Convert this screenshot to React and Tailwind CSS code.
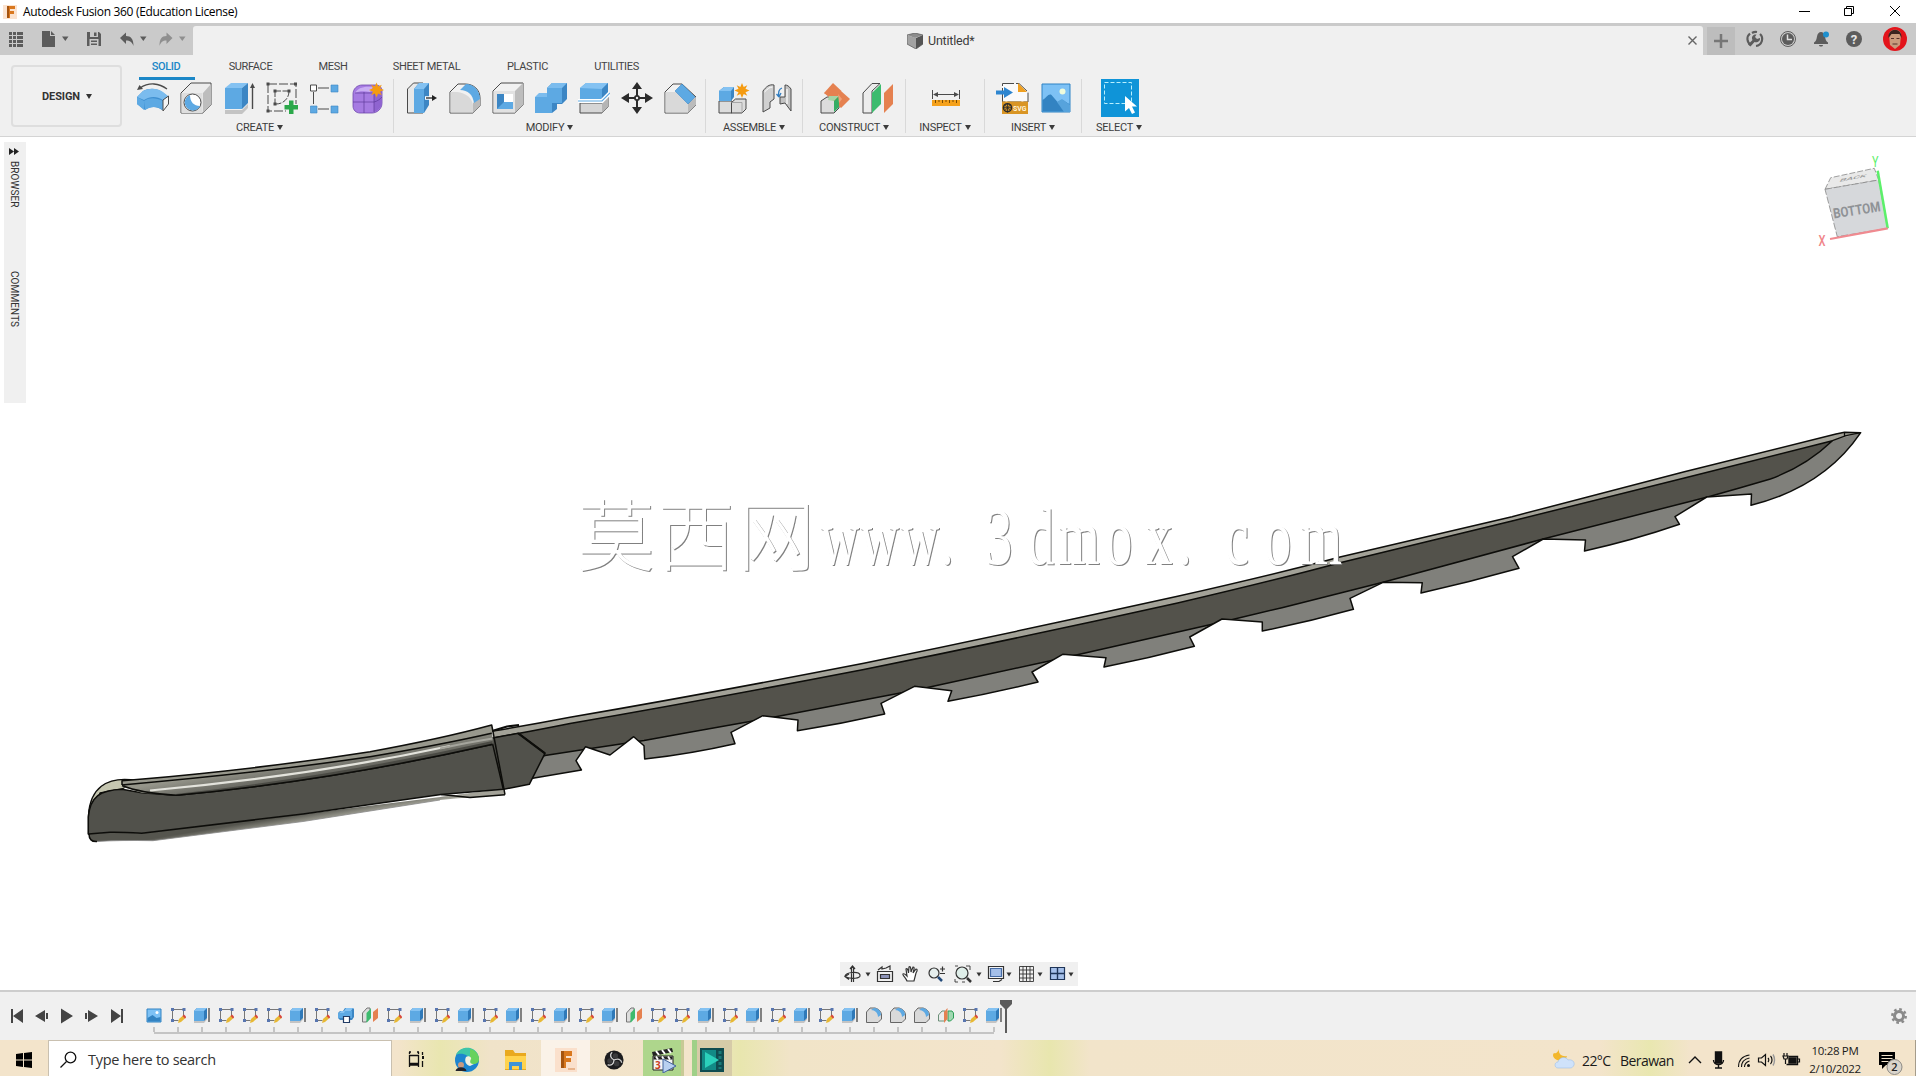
import clsx from 'clsx';

const BLUE = '#5da9e3';
const GREY = '#d9d9d9';
const INK = '#4a4a4a';

function Caret({ className }) {
  return (
    <svg viewBox="0 0 6 5" className={clsx('w-1.5 h-[5px] shrink-0', className)} fill="currentColor">
      <path d="M0 0h6L3 5z" />
    </svg>
  );
}

function Icon({ children, size = 'w-8 h-8', box = '0 0 32 32' }) {
  return (
    <svg viewBox={box} className={clsx('shrink-0', size)} fill="none">
      {children}
    </svg>
  );
}

/* ---------- ribbon icons ---------- */

function RevolveIcon() {
  return (
    <Icon>
      <path d="M3 6C12 0 22 1 30 7" stroke={INK} strokeWidth="1.3" />
      <path d="M0 8l2.500-5L6 7z" fill={INK} />
      <path d="M0 15l6-6c6-3 13-3 19 1l7 5-7 13c-5-4-12-4-17 0L0 22z" fill="#3f8fd0" />
      <path d="M0 15l6-6c7-3 14-3 20 1l5 4-5 4c-6-4-13-4-19 0z" fill="#7bbcee" />
      <path d="M0 15l7 4v9l-7-6zM7 19c6-4 12-3 19 0v9c-6-4-12-4-18 0z" fill={BLUE} />
      <path d="M26 18l5.500-4v8L26 29z" fill="#f5f5f5" stroke={INK} />
    </Icon>
  );
}

function HoleIcon() {
  return (
    <Icon>
      <path d="M1 11l10-10h20v22l-8 8H1z" fill="#ececec" stroke={INK} />
      <path d="M23 11l8-9v21l-8 8z" fill="#bdbdbd" />
      <path d="M1.500 11h21v20h-21z" fill="#dedede" />
      <circle cx="12.500" cy="20.500" r="8.500" fill="#fff" stroke={INK} />
      <path d="M10 13a8 8 0 1 0 10 11c-6 0-10-4-10-11z" fill={BLUE} />
    </Icon>
  );
}

function ExtrudeIcon() {
  return (
    <Icon>
      <path d="M2 28h17l6-6v4l-6 6H2z" fill="#c4c4c4" />
      <path d="M2 6l6-5h17l-6 5z" fill="#84c2f2" />
      <path d="M2 6h17v21H2z" fill={BLUE} />
      <path d="M19 6l6-5v20l-6 6z" fill="#3c86c4" />
      <path d="M29.500 4v23" stroke={INK} strokeWidth="1.400" />
      <path d="M27 6l2.500-5L32 6z" fill={INK} />
    </Icon>
  );
}

function SketchIcon() {
  return (
    <Icon>
      <path d="M2 2h28v20M2 2v27h18" stroke={INK} strokeDasharray="9 2" />
      <path d="M9 9h14M9 9v13M23 9c0 8-6 13-13 13" stroke={INK} strokeDasharray="6 1.500" />
      <path d="M0.500 0.500h3v3h-3zM28 0.500h3v3h-3zM0.500 27.500h3v3h-3zM7.500 7.500h3v3h-3zM21.500 7.500h3v3h-3zM7.500 20.500h3v3h-3z" fill={INK} />
      <path d="M23 18.500h4.500V23H32v4.500h-4.500V32H23v-4.500h-4.500V23H23z" fill="#2ba84a" />
    </Icon>
  );
}

function PatternIcon() {
  return (
    <Icon>
      <path d="M9 6h11M4.500 10v12M9 27h11" stroke={INK} />
      <path d="M1.500 3h6v6h-6z" fill="#fff" stroke={INK} />
      <path d="M22 3h7v7h-7zM1.500 24h6.500v7H1.500zM22 24h7v7h-7z" fill={BLUE} stroke="#3c86c4" strokeWidth=".6" />
    </Icon>
  );
}

function Burst({ x, y }) {
  return (
    <path
      transform={`translate(${x} ${y})`}
      d="M0-7.500L1.700-3.500 5.300-5.300 3.500-1.700 7.500 0 3.500 1.700 5.300 5.300 1.700 3.500 0 7.500-1.700 3.500-5.300 5.300-3.500 1.700-7.500 0-3.500-1.700-5.300-5.300-1.700-3.500z"
      fill="#f59b11"
    />
  );
}

function FormIcon() {
  return (
    <Icon>
      <path d="M1 12c0-5 4-9 9-9h13c4 0 7 2 7 6v12c0 6-5 10-10 10H8c-4 0-7-3-7-7z" fill="#a67be2" stroke="#6f48ad" strokeWidth=".8" />
      <path d="M3 11c3-5 8-7 18-6l-3 5c-6-1-11-1-15 1z" fill="#c9adf3" />
      <path d="M22 11c3-1 6-3 8-5v16c-2 5-5 7-8 8z" fill="#8f64d0" />
      <path d="M12 10v21M1 20h21c4-1 6-3 8-5M22 10v20M3 11h18" stroke="#5f3b9c" strokeWidth=".7" />
      <Burst x={24.500} y={8} />
    </Icon>
  );
}

function PressPullIcon() {
  return (
    <Icon>
      <path d="M1.500 7l6-6H17v30H1.500z" fill="#e8e8e8" stroke={INK} />
      <path d="M8 7l5-6h10v22l-5 8H8z" fill="#3c86c4" />
      <path d="M8 7l5-6h10l-5 6z" fill="#84c2f2" />
      <path d="M8 7h10v24H8z" fill={BLUE} />
      <path d="M19 16h9" stroke="#fff" strokeWidth="3.500" />
      <path d="M20 16h7" stroke="#222" strokeWidth="1.300" />
      <path d="M26 13l5 3-5 3z" fill="#222" />
    </Icon>
  );
}

function FilletIcon() {
  return (
    <Icon>
      <path d="M1 10l8-8h7c9 0 15 6 15 14v8l-7 7H1z" fill="#f1f1f1" stroke={INK} />
      <path d="M1.500 10H8c9 1 15 6 16 13v7.500H1.500z" fill={GREY} />
      <path d="M24 21l7-5v8l-7 7z" fill="#bbb" />
      <path d="M11 8l6-6c8 0 14 7 14 15l-6 4C24 13 19 8 11 8z" fill={BLUE} />
    </Icon>
  );
}

function ShellIcon() {
  return (
    <Icon>
      <path d="M1 9l8-8h22v22l-8 8H1z" fill="#f1f1f1" stroke={INK} />
      <path d="M23 9l8-8v22l-8 8z" fill="#bdbdbd" />
      <path d="M1.500 9H23v21.500H1.500z" fill="#e2e2e2" />
      <path d="M5 12h16v15H5z" fill="#fff" />
      <path d="M5 12h7v9l-6 6H5z" fill="#3c86c4" />
      <path d="M5 27l7-7h9v7z" fill={BLUE} />
    </Icon>
  );
}

function CombineIcon() {
  return (
    <Icon>
      <path d="M0 16l5-5h7V6l5-5h15v16l-5 5h-5v5l-5 4H0z" fill="#3c86c4" />
      <path d="M12 6l5-5h15l-5 5zM0 15l4-4h8v4z" fill="#7bbcee" />
      <path d="M12 6h15v15H12zM0 15h17v16H0z" fill={BLUE} />
    </Icon>
  );
}

function SplitIcon() {
  return (
    <Icon>
      <path d="M2 21h22l6-6v10l-6 6H2z" fill="#d6d6d6" stroke={INK} />
      <path d="M24 21l6-6v10l-6 6z" fill="#b5b5b5" />
      <path d="M2 6l6-5h22v10l-6 6H2z" fill={BLUE} />
      <path d="M2 6l6-5h22l-6 6z" fill="#84c2f2" />
      <path d="M24 7l6-6v10l-6 6z" fill="#3c86c4" />
      <path d="M0 19h24l8-8" stroke="#fff" strokeWidth="4" />
      <path d="M0 19h24l8-8" stroke={BLUE} strokeWidth="1.200" />
    </Icon>
  );
}

function MoveIcon() {
  return (
    <Icon>
      <path d="M16 5v22M5 16h22" stroke="#2b2b2b" strokeWidth="2" />
      <path d="M16 0l5 7H11zM16 32l5-7H11zM0 16l8-5v10zM32 16l-8-5v10z" fill="#2b2b2b" />
      <circle cx="16" cy="16" r="3" fill="#2b2b2b" />
      <circle cx="16" cy="16" r="1.200" fill="#f0f0f0" />
    </Icon>
  );
}

function ChamferIcon() {
  return (
    <Icon>
      <path d="M1 10l8-8h9l14 13v8l-8 8H1z" fill="#f1f1f1" stroke={INK} />
      <path d="M1.500 10H12l12 12v8.500H1.500z" fill={GREY} />
      <path d="M24 21l8-6v8l-8 8z" fill="#bbb" />
      <path d="M11 9l7-7 13 13-7 7z" fill={BLUE} stroke="#3c86c4" strokeWidth=".6" />
    </Icon>
  );
}

function ComponentIcon() {
  return (
    <Icon>
      <path d="M1 19h13v12H1z" fill="#dcdcdc" stroke={INK} />
      <path d="M13.500 20.500l4-3.500H28v10l-4 4H13.500z" fill="#dcdcdc" stroke={INK} />
      <path d="M13.500 20.500H24V31" stroke="#999" strokeWidth=".8" />
      <path d="M1 9l5-4h10v10l-3 4H1z" fill="#3c86c4" />
      <path d="M1 9h12v10H1z" fill={BLUE} />
      <path d="M1 9l5-4h10l-3 4z" fill="#84c2f2" />
      <Burst x={24} y={8.500} />
    </Icon>
  );
}

function JointIcon() {
  return (
    <Icon>
      <path d="M2 9c3-4 6-7 11-6v14l-4 3v6l-7 4z" fill="#d0d0d0" stroke={INK} />
      <path d="M3.500 10c3-3 5-5 8-5" stroke="#fff" />
      <path d="M30 7c-2-3-4-4-6-4v12h-5v7l5-1 6 8z" fill="#c2c2c2" stroke={INK} />
      <path d="M26 7v15" stroke="#f5f5f5" strokeWidth="1.500" />
      <path d="M18 15c-1-5 0-8 3-9M18 15l-2.500-3M18 15l2-4" stroke="#2f7cc0" strokeWidth="1.300" />
    </Icon>
  );
}

function OffsetPlaneIcon() {
  return (
    <Icon>
      <path d="M3 19l6-4h12v11l-5 5H3z" fill="#dcdcdc" stroke={INK} />
      <path d="M15 1l8.500 8-8.500 7-9-5z" fill="#e58150" />
      <path d="M6 11l7-1 10-1 9 8-9 9-6-6z" fill="#e58150" />
      <path d="M11 14h10l-5 5-6-1z" fill="#a5d5a5" />
      <path d="M16 19l5-5v11l-5 5z" fill="#35ad63" />
      <path d="M20 12l4 5-3 4z" fill="#f0a077" />
    </Icon>
  );
}

function MidPlaneIcon() {
  return (
    <Icon>
      <path d="M2 11L11 1.500h8L11 9v22H2z" fill="#ececec" stroke={INK} />
      <path d="M11 11l9-9v20l-9 9z" fill="#3dbb6e" />
      <path d="M23 11l9-9v20l-9 9z" fill="#e58150" />
    </Icon>
  );
}

function MeasureIcon() {
  return (
    <Icon>
      <path d="M2.500 8v9M29.500 8v9M5 12.500h22" stroke={INK} />
      <path d="M3 12.500l5-2.500v5zM29 12.500L24 10v5z" fill={INK} />
      <path d="M2 18h28v6H2z" fill="#f5a11b" />
      <path d="M5.500 18v3M9 18v2M12.500 18v3M16 18v2M19.500 18v3M23 18v2M26.500 18v3" stroke="#7a4b00" />
    </Icon>
  );
}

function InsertSvgIcon() {
  return (
    <Icon size="w-[34px] h-8" box="0 0 34 32">
      <path d="M6.500 20V1.500H23L32 10v10z" fill="#fafafa" stroke={INK} strokeDasharray="14 2" />
      <path d="M22 1l9 9h-9z" fill="#f0a020" />
      <path d="M6 19.500h26V32H6z" fill="#d99524" />
      <path d="M0 8.500h8V5l9 5.500L8 16v-3.500H0z" fill="#2e86d0" />
      <circle cx="11.500" cy="25.700" r="4" stroke="#2b2b2b" strokeWidth="1.500" />
      <path d="M11.500 21v9.500M7 25.700h9M8.300 22.500l6.500 6.500M14.800 22.500L8.300 29" stroke="#2b2b2b" strokeWidth=".8" />
      <text x="17" y="28.700" fontSize="8" fontWeight="700" textLength="13.500" lengthAdjust="spacingAndGlyphs" fill="#fff3d8">SVG</text>
    </Icon>
  );
}

function CanvasIcon() {
  return (
    <Icon>
      <path d="M2 2h28v28H2z" fill="#7dc1f5" stroke="#2f83c5" />
      <path d="M2.500 18c4-2 6-7 9-5l6 7 4-2c3 0 5 3 8 4v7.500h-27z" fill="#3383c2" />
      <path d="M17 20l5-3 8 6v7h-6z" fill="#57a3dc" />
      <circle cx="22.500" cy="9.500" r="3" fill="#eefbdc" />
    </Icon>
  );
}

function SelectIcon() {
  return (
    <div className="w-[38px] h-[38px] bg-[#0f94d8] shrink-0">
      <Icon size="w-[38px] h-[38px]" box="0 0 38 38">
        <path d="M3.500 3.500h27v21h-27z" stroke="#b8f0ff" strokeDasharray="4 2" />
        <path d="M24 17v15.500l4-3.500 3 6 3-1.500-3-6h5z" fill="#fff" />
      </Icon>
    </div>
  );
}

const GROUPS = [
  { label: 'CREATE', width: 'w-[268px]', icons: [RevolveIcon, HoleIcon, ExtrudeIcon, SketchIcon, PatternIcon, FormIcon] },
  { label: 'MODIFY', width: 'w-[312px]', icons: [PressPullIcon, FilletIcon, ShellIcon, CombineIcon, SplitIcon, MoveIcon, ChamferIcon] },
  { label: 'ASSEMBLE', width: 'w-[97px]', icons: [ComponentIcon, JointIcon] },
  { label: 'CONSTRUCT', width: 'w-[103px]', icons: [OffsetPlaneIcon, MidPlaneIcon] },
  { label: 'INSPECT', width: 'w-[79px]', icons: [MeasureIcon] },
  { label: 'INSERT', width: 'w-[97px]', icons: [InsertSvgIcon, CanvasIcon] },
  { label: 'SELECT', width: 'w-[74px]', icons: [SelectIcon], last: true },
];

const TABS = [
  { label: 'SOLID', width: 'w-[31px]', active: true },
  { label: 'SURFACE', width: 'w-[46px]' },
  { label: 'MESH', width: 'w-[27px]' },
  { label: 'SHEET METAL', width: 'w-[68px]' },
  { label: 'PLASTIC', width: 'w-[42px]' },
  { label: 'UTILITIES', width: 'w-11' },
];

function TitleBar() {
  return (
    <div className="h-[23px] bg-white flex items-center shrink-0 font-['Open_Sans',sans-serif]">
      <svg viewBox="0 0 14 14" className="w-[14px] h-[14px] ml-[3px] shrink-0">
        <path d="M0 0h14v14H0z" fill="#fbe3d0" />
        <path d="M4 1h8v3H7v2h4v3H7v4H4z" fill="#d9781f" />
        <path d="M4 1h2v12H4z" fill="#a5540f" />
      </svg>
      <span className="ml-1.5 text-[12px] leading-none text-black whitespace-nowrap tracking-[-0.320px]">
        Autodesk Fusion 360 (Education License)
      </span>
      <svg viewBox="0 0 110 12" className="w-[110px] h-3 ml-auto mr-[13px] -mt-0.5" fill="none" stroke="#000">
        <path d="M6 6.500h11M51.500 3.500h7v7h-7zM53.500 3.500v-2h7v7h-2M97 1l10 10M107 1L97 11" />
      </svg>
    </div>
  );
}

function QuickAccess() {
  return (
    <div className="w-[193px] h-[29px] shrink-0 text-[#5c5c5c]">
      <svg viewBox="0 0 193 29" className="w-[193px] h-[29px]" fill="#5c5c5c">
        {[6, 10, 14, 18].map((y) =>
          [9, 13, 17, 20].map((x) => <rect key={`${x}-${y}`} x={x} y={y} width="3" height="3" />)
        )}
        <path d="M42 5h8v5h5v11H42zM51 5l4 4h-4z" />
        <path d="M62 10.500h6.500l-3.200 4.500zM140 10.500h6.500l-3.200 4.500z" />
        <path d="M87 6h12l2 2v12H87z" />
        <path d="M90 6h8v5h-8zM89.500 13h9v7h-9z" fill="#cacaca" />
        <path d="M94 6.500h2.500v3.500H94zM91 14.500h6V16h-6zM91 17.500h6V19h-6z" />
        <path d="M120 12l6-5.500v3.500c5 0 7.500 3 7.500 10-1.500-4-3.500-5.500-7.500-5.500v3.500z" />
        <g fill="#8f8f8f">
          <path d="M172.500 12l-6-5.500v3.500c-5 0-7 3-7 10 1.500-4 3-5.500 7-5.500v3.500z" />
          <path d="M179 10.500h6.500l-3.200 4.500z" />
        </g>
      </svg>
    </div>
  );
}

function TabStrip() {
  return (
    <div className="h-8 bg-[#cacaca] flex items-end shrink-0">
      <QuickAccess />
      <div className="w-[1510px] h-[29px] bg-[#f0f0f0] rounded-t-[3px] flex items-center shrink-0">
        <svg viewBox="0 0 16 16" className="w-4 h-4 ml-[714px] shrink-0">
          <path d="M0 2l8-2 8 2-8 3z" fill="#8d8d8d" />
          <path d="M0 2l9 3v11l-9-5z" fill="#a3a3a3" />
          <path d="M9 5l7-3v9l-7 5z" fill="#555" />
          <path d="M0 2l8-2 8 2v9l-7 5-9-5z" fill="none" stroke="#555" strokeWidth=".7" />
        </svg>
        <span className="ml-[5px] mt-0.5 text-[12.500px] tracking-[-0.200px] text-[#3c3c3c] whitespace-nowrap leading-none">Untitled*</span>
        <svg viewBox="0 0 9 9" className="w-[9px] h-[9px] ml-auto mr-1.5" stroke="#666" strokeWidth="1.400">
          <path d="M.5.5l8 8M8.500.5l-8 8" />
        </svg>
      </div>
      <div className="w-7 h-[28px] ml-1 bg-[#bdbdbd] flex items-center justify-center shrink-0">
        <svg viewBox="0 0 14 14" className="w-[14px] h-[14px]" stroke="#777" strokeWidth="2.500">
          <path d="M7 0v14M0 7h14" />
        </svg>
      </div>
      <svg viewBox="1735 26 181 29" className="w-[181px] h-[29px] shrink-0" fill="none">
        <path d="M1750 33.500a7 7 0 0 0 1 11.500M1756 46a7 7 0 0 0 4-12M1752 33a7 7 0 0 1 5-1" stroke="#5c5c5c" strokeWidth="2.200" />
        <path d="M1748 44.500l4.500-4.500c-1.500-3 .5-6 4-5.500l-1.500 2.500 2 2 3-1c.5 3-2.500 5-5.500 4l-4 4.500z" fill="#5c5c5c" />
        <circle cx="1788" cy="39" r="7.500" stroke="#5c5c5c" />
        <circle cx="1788" cy="39" r="6" fill="#5c5c5c" />
        <path d="M1787.500 34.500v5h4.500" stroke="#e0e0e0" strokeWidth="1.500" />
        <path d="M1814 44v-1.500c2-1 2.500-3 3-6s2-4.500 4-4.500 3.500 1.500 4 4.500 1 5 3 6V44zM1819 45h4c0 2-4 2-4 0z" fill="#5c5c5c" />
        <circle cx="1826" cy="34.500" r="3" fill="#1e8fcd" />
        <circle cx="1854" cy="39" r="8" fill="#5c5c5c" />
        <text x="1854" y="44" textAnchor="middle" fontSize="13" fontWeight="700" fill="#e6e6e6">?</text>
        <circle cx="1895" cy="39" r="12" fill="#e3141b" />
        <path d="M1889 35c0-7 12-7 12 0l-1 10-5 4-5-4z" fill="#c99a7c" />
        <path d="M1888.500 38c-1-11 14-11 13 0l-2-4h-8z" fill="#3b2420" />
        <path d="M1891 38.500h3M1896.500 38.500h3M1892.500 44h5" stroke="#55302a" />
      </svg>
    </div>
  );
}

function Ribbon() {
  return (
    <div className="h-[82px] bg-[#f0f0f0] border-b border-[#d4d4d4] flex shrink-0">
      <button className="w-[111px] h-[62px] mt-[10px] ml-[11px] pl-px border-2 border-[#dedede] rounded-[4px] flex items-center justify-center gap-1.5 shrink-0 text-[#333]">
        <span className="text-[11px] font-bold tracking-[-0.100px] leading-none">DESIGN</span>
        <Caret />
      </button>
      <div className="flex flex-col ml-1">
        <div className="h-6 flex gap-[46px] pl-[25.500px]">
          {TABS.map((tab) => (
            <div
              key={tab.label}
              className={clsx('relative h-[23px] pt-1 -ml-px mr-px flex justify-center text-[11px] tracking-[-0.350px] whitespace-nowrap', tab.width, tab.active ? 'text-[#1b87c7] font-medium' : 'text-[#444]')}
            >
              {tab.label}
              {tab.active && <span className="absolute -left-3 top-[21.500px] w-14 h-[3px] bg-[#1b87c7]" />}
            </div>
          ))}
        </div>
        <div className="flex">
          {GROUPS.map((group) => (
            <div
              key={group.label}
              className={clsx('h-[54px] flex flex-col items-center shrink-0', group.width, !group.last && 'border-r border-[#d9d9d9]')}
            >
              <div className="h-[38px] pl-0.5 flex items-center justify-center">
                {group.icons.map((Glyph, i) => (
                  <div key={i} className="w-[43px] h-[38px] flex items-center justify-center">
                    <Glyph />
                  </div>
                ))}
              </div>
              <div className="mt-1 flex items-center gap-[3px] text-[11px] tracking-[-0.250px] leading-[13px] text-[#3c3c3c]">
                {group.label}
                <Caret />
              </div>
            </div>
          ))}
        </div>
      </div>
    </div>
  );
}

const BLADE_OUTLINE =
  'M493 731Q530 725 570 717.300Q706 694 863.800 663.300Q1020 631 1177.600 596.300Q1280 573 1340 557L1512 516.700L1684.400 471.700L1836 434L1844.500 432.300L1860.700 432.700';
const BLADE_INNER =
  'M493 738L518 733.500Q540 729.500 570 723.500Q706 700 863.800 669.500Q1020 638 1177.600 603Q1280 579 1340 562.700L1512 521L1684.400 478L1832.400 440.700';
const DARK_EDGE =
  'L1832.400 440.700Q1806 466 1770.400 479Q1740 488 1708.500 496.700L1543 539L1383 582.300L1282 607.700L1222 622L1063 658L916 690L764 719L691 732L644 740.500L584 749.500L545 755.500';
const TEETH =
  'Q1824 487 1751 505.300L1751.500 494L1706.700 497L1675 516.700L1679.500 524.300Q1634 540 1584.500 551L1585.500 540L1543.200 539L1512.500 556.700L1519 568.300Q1470 582 1421 593L1422.300 582.700L1383 582.300L1350 598.300L1353.400 609.300Q1308 622 1262.300 631L1262.300 622L1222 619L1189.700 637L1194.400 646.300Q1150 658 1104 667L1106 657.700L1062.600 654.300L1032 672L1038 682Q993 693 948 701.300L951.700 690.700L914.500 686.300L881 703.300L884.700 714Q841 724 797.400 730.700L798 720L762.900 715.700L731 732.300L735 743.700Q690 754 644.700 759L644 745.700L633.700 736.700L610 755L585.600 746.700L576 760.700L581.400 770L532.700 778.300L500 770';

function Sword() {
  return (
    <g strokeLinejoin="round">
      <defs>
        <linearGradient id="grip" x1="300" y1="760" x2="304" y2="784" gradientUnits="userSpaceOnUse">
          <stop offset="0" stopColor="#95958a" />
          <stop offset=".45" stopColor="#77776f" />
          <stop offset="1" stopColor="#55554f" />
        </linearGradient>
        <linearGradient id="belly" x1="300" y1="814" x2="302" y2="826" gradientUnits="userSpaceOnUse">
          <stop offset="0" stopColor="#55554e" />
          <stop offset="1" stopColor="#b8b8ac" />
        </linearGradient>
        <clipPath id="blade">
          <path d={`${BLADE_OUTLINE}${TEETH}z`} />
        </clipPath>
      </defs>
      <g clipPath="url(#blade)">
        <path d={`${BLADE_OUTLINE}${TEETH}z`} fill="#80807b" />
        <path d={`${BLADE_OUTLINE}L1832.400 440.700L1684.400 478L1512 521L1340 562.700Q1280 579 1177.600 603Q1020 638 863.800 669.500Q706 700 570 723.500L493 738z`} fill="#a3a298" />
        <path d="M1832.400 440.700L1846 435.700L1860.700 432.700M1844.500 432.300V436" stroke="#0d0d0a" strokeWidth="1.300" fill="none" />
        <path d={`${BLADE_INNER}${DARK_EDGE}L500 770z`} fill="#53524b" stroke="#0d0d0a" strokeWidth="1.500" />
      </g>
      <path d={`${BLADE_OUTLINE}${TEETH}`} stroke="#0d0d0a" strokeWidth="1.500" fill="none" />
      {/* collar between blade and grip */}
      <path d="M490 738.500L518.300 733.300L545 753.300L529.300 784.300L500 790z" fill="#51514b" stroke="#0d0d0a" strokeWidth="1.500" />
      <path d="M518.300 733.300L545 753.300" stroke="#0d0d0a" strokeWidth="2.200" />
      <path d="M492 731L507 726.500L519 725" stroke="#0d0d0a" strokeWidth="2" fill="none" />
      {/* grip */}
      <path d="M88.500 834V815C90 790 105 775 137 780.500L122 789L100 793z" fill="#c5c6b0" stroke="#0d0d0a" strokeWidth="1.300" />
      <path d="M89 834L110 832.300L141.700 833.300L303 814L503.300 789.300L505 794.700Q470 797 440 800L303 821.500L153 840.700Q115 840 93 842Q89 840 89 834z" fill="url(#belly)" />
      <path d="M440 797L503.300 789.300L505 794.700L470 797.500z" fill="#a3a298" />
      <path d="M89 834Q89 842 97 841.500M441 794.500L470 797.500L505 794.700" stroke="#0d0d0a" strokeWidth="1.500" fill="none" />
      <path d="M97 841.500Q120 840 153 840.700L303 821.500L440 800" stroke="#888" strokeWidth=".8" fill="none" />
      <path d="M88.300 834V817C90 797 100 790 122 789.300L141.700 792.700L176.700 795.300Q330 781 492.700 744.300L503.300 789.300L441 794.500L303 814L141.700 833.300Q120 832 110 832.300z" fill="#51514b" stroke="#0d0d0a" strokeWidth="1.500" />
      <path d="M122 780.700L137 779.500Q260 769 370 751.700Q440 739 491.700 725L493 744.300Q330 781 176.700 795.300L141.700 792.700L122 786.700z" fill="url(#grip)" />
      <path d="M122 784Q260 773 370 756.500Q440 745 492 732V726Q440 740 370 752.500Q260 769 122 781z" fill="#98988d" />
      <path d="M176 794Q330 777 492.500 741V744.500Q330 781 176.700 795.300z" fill="#4a4a44" />
      <path d="M150 790.500Q310 776 450 746" stroke="#e3e3dc" strokeWidth="2.200" fill="none" />
      <path d="M440 748.500Q470 742 492.500 738.500" stroke="#a5a59d" strokeWidth="2" fill="none" />
      <path d="M122 785V780.700L137 779.500Q260 769 370 751.700Q440 739 491.700 725L505 794.700M122 785Q260 773 370 756.800Q440 745 491.700 733.300M122 785.500Q140 793 176.700 795.300Q330 781 492.700 744.300" stroke="#0d0d0a" strokeWidth="1.500" fill="none" />
    </g>
  );
}

function ViewCube() {
  return (
    <g>
      <path d="M1825 189.300L1830.700 177.700L1874.300 168.300L1878.700 180z" fill="#e9e9e9" stroke="#888" strokeWidth=".8" strokeDasharray="6 2" />
      <path d="M1825 189.300L1878.700 180L1887.700 228.300L1837.300 236.700z" fill="#d6d8db" stroke="#888" strokeWidth=".8" strokeDasharray="7 2" />
      <path d="M1877.700 170.700L1887.700 228.300" stroke="#5cf06a" strokeWidth="2.500" />
      <path d="M1830 239L1887.700 228.300" stroke="#f08a90" strokeWidth="2.200" />
      <text transform="translate(1834 218.500) rotate(-9)" fontSize="14" fontWeight="700" textLength="47.500" lengthAdjust="spacingAndGlyphs" fill="#8f9296">BOTTOM</text>
      <text transform="matrix(.98 -.19 -.3 .45 1839 182)" fontSize="10" fontWeight="500" textLength="27" lengthAdjust="spacingAndGlyphs" fill="#999">BACK</text>
      <text x="1818.500" y="245.500" fontSize="14" fontWeight="500" textLength="7" lengthAdjust="spacingAndGlyphs" fill="#f0858a">X</text>
      <text x="1872" y="167" fontSize="14" textLength="6.500" lengthAdjust="spacingAndGlyphs" fill="#5cf06a">Y</text>
    </g>
  );
}

function Watermark() {
  return (
    <g fill="#fff" className="drop-shadow-[1.500px_1.500px_0_#808080]">
      <text x="577 657 737" y="565" fontSize="78" fontWeight="300" className="font-['Noto_Sans_CJK_SC',sans-serif]">莫西网</text>
      <text
        transform="translate(0 564) scale(.67 1)"
        x="1224.800 1283.800 1344.200 1403.400 1471 1533.700 1579.300 1650 1709.900 1758.700 1828.500 1887.500 1940.500"
        y="0"
        fontSize="80"
        className="font-['Liberation_Serif',serif]"
      >
        www.3dmox.com
      </text>
    </g>
  );
}

function SidePanel() {
  return (
    <div className="absolute left-1 top-[5px] w-[22px] h-[261px] bg-[#f0f0f0] flex flex-col items-center pt-1.5 pr-0.5 text-[#333]">
      <svg viewBox="0 0 10 7" className="w-2.5 h-[7px] shrink-0" fill="#222">
        <path d="M0 0l5 3.500L0 7zM5 0l5 3.500L5 7z" />
      </svg>
      <span className="h-[48px] mt-1.5 text-[10px] leading-[12px] tracking-[0.1px] [writing-mode:vertical-rl]">BROWSER</span>
      <span className="h-[58px] mt-[62px] text-[10px] leading-[12px] tracking-[0.1px] [writing-mode:vertical-rl]">COMMENTS</span>
    </div>
  );
}

function NavBar() {
  return (
    <div className="absolute left-[840px] bottom-1 w-[238px] h-6 bg-[#f0f0f0]">
      <svg viewBox="840 962 238 24" className="w-[238px] h-6" fill="none" stroke="#333" strokeWidth="1.200">
        <path d="M851.500 967v15M853.500 967v15M850 969l2.500-3 2.500 3M845 976c1-4 14-5 15-1s-9 4-14 2M849 974l-4 2.500 4 3" />
        <path d="M877.500 971.500h15v10h-15zM878 970l4-3v2l4-1 4-2v4" />
        <path d="M880.500 974.500h9v4h-9z" fill="#8d93b8" />
        <path d="M907 981c-1-3-5-6-4-7s2 0 4 2l-1-7c1-1 2 0 2.500 4l.5-6c1-1 2 0 2 5l2-5c1 0 2 0 0 6l3-4c1 0 2 1 0 4l-2 8z" fill="#fff" />
        <circle cx="934" cy="973" r="5" fill="#e6efee" />
        <path d="M938 977l4 4" stroke="#224a7a" strokeWidth="2.500" />
        <path d="M940 969h5M942.500 966.500v5M940 973.500h5" />
        <circle cx="962" cy="973" r="6" fill="#dfeee9" />
        <path d="M967 978l4 4" strokeWidth="2.500" />
        <path d="M955 966h3M966 966h4M955 982h3M962 982h3M955 979v3M970 966v4" strokeWidth=".9" />
        <path d="M988.500 966.500h15v12h-15z" fill="#f5f5f5" />
        <path d="M990.500 968.500h11v8h-11z" fill="#a5c0ea" stroke="#456ba5" />
        <path d="M993 981.500h6l3-2" />
        <path d="M1019.500 966.500h14v15h-14zM1023 966v15M1026.500 966v15M1030 966v15M1019 970h14M1019 974h14M1019 978h14" strokeWidth=".9" />
        <path d="M1050.500 967.500h14v12h-14z" fill="#a5c0ea" stroke="#1f3558" />
        <path d="M1057.500 967v13M1050 973.500h15" stroke="#1f3558" strokeWidth="1.400" />
        {[868, 979, 1009, 1040, 1071].map((x) => (
          <path key={x} d={`M${x - 2.5} 972.500h5l-2.500 4z`} fill="#333" stroke="none" />
        ))}
      </svg>
    </div>
  );
}

function Viewport() {
  return (
    <div className="relative h-[853px] bg-white shrink-0">
      <svg viewBox="0 137 1916 853" className="w-[1916px] h-[853px]" fill="none">
        <Sword />
        <Watermark />
        <ViewCube />
      </svg>
      <SidePanel />
      <NavBar />
    </div>
  );
}

/* ---------- timeline ---------- */

const FEATURES = {
  // canvas
  i: (
    <>
      <path d="M1 2h14v13H1z" fill="#7dc1f5" stroke="#3383c2" />
      <path d="M1.500 11l5-3 4 3 4-1v4.500h-13z" fill="#3383c2" />
      <circle cx="11" cy="5.500" r="1.500" fill="#fff" />
    </>
  ),
  // sketch
  s: (
    <>
      <path d="M2.500 2.500h11v7M2.500 2.500v11h6" stroke="#777" />
      <path d="M1 1h3v3H1zM12.500 1h3v3h-3zM1 12h3v3H1z" fill="#5876b0" />
      <path d="M8 16l1-4 4-3.500 2.500 2.500-4.500 4z" fill="#e8b935" />
      <path d="M12.500 9l1.500-1.500 2.500 2.500-1.500 1.500z" fill="#d9463c" />
    </>
  ),
  // extrude
  e: (
    <>
      <path d="M0 13l10 .5 3-3v2l-3 3.500H0z" fill="#c4c4c4" />
      <path d="M0 4l3-3h10v10l-3 3H0z" fill="#2f79b8" />
      <path d="M0 4l3-3h10l-3 3z" fill="#84c2f2" />
      <path d="M0 4h10v10H0z" fill={BLUE} />
      <path d="M15 1v14" stroke="#444" strokeWidth="1.300" />
    </>
  ),
  // combine
  c: (
    <>
      <path d="M0 6l2-2h3l2-3h8l1 1v8l-2 3H2l-2-2z" fill="#3c86c4" />
      <path d="M0 6h5l1-2h8v7H0z" fill={BLUE} />
      <path d="M1 6l2-2h3l2-3h7l-2 3H7L6 6z" fill="#84c2f2" />
      <path d="M5.500 9.500h6v6h-6z" fill="#fff" stroke="#223c66" strokeWidth="1.200" />
    </>
  ),
  // plane
  p: (
    <>
      <path d="M.5 15V6L5 1h3v9l-4 5z" fill="#ddd" stroke="#777" />
      <path d="M4.500 6L9 1.500V11l-4.500 5z" fill="#3dbb6e" />
      <path d="M11 5l5-4v10l-5 4z" fill="#e58150" />
    </>
  ),
  // fillet
  f: (
    <>
      <path d="M.5 5L4 1h5c4 1 6.500 4 6.500 7v4L12 15.500H.5z" fill={GREY} stroke="#666" />
      <path d="M5 3l3-2c4 0 7 3 7 7l-3 2c0-4-3-7-7-7z" fill={BLUE} />
    </>
  ),
  // mirror
  m: (
    <>
      <path d="M.5 14V8L4 4h3v10z" fill="#ececec" stroke="#6b8f78" />
      <path d="M10 4h4l1.500 2v5l-3 3H10z" fill="#9fd8b1" stroke="#2c9c56" />
      <path d="M6 5l3.500-4v11L6 16z" fill="#e58150" />
    </>
  ),
};

const STEPS = [...'isesssescpsesesesesepssesesesefffmse'];

function Timeline() {
  return (
    <div className="h-[50px] bg-[#f0f0f0] border-t-2 border-[#cdcdcd] flex shrink-0">
      <svg viewBox="0 992 130 48" className="w-[130px] h-12 shrink-0" fill="#444">
        <path d="M11 1009h2v14h-2zM23 1009v14l-10-7zM45 1010v12l-10-6zM46 1013h2v6h-2zM61 1008.500v15l12-7.500zM85 1013h2v6h-2zM88 1010v12l10-6zM111 1009v14l10-7zM121 1009h2v14h-2z" />
      </svg>
      <div className="flex pt-[15px] pl-3 w-[876px] shrink-0">
        {STEPS.map((kind, i) => (
          <div key={i} className="w-6 flex flex-col items-center shrink-0">
            <svg viewBox="0 0 16 17" className="w-4 h-[17px]" fill="none">{FEATURES[kind]}</svg>
            <div className="h-[9px] w-full mt-[3px] flex flex-col items-center">
              <span className="w-0.5 h-[5px] bg-[#c4c4c4]" />
              <span className={clsx('h-0.5 bg-[#c4c4c4]', i === 0 || i === STEPS.length - 1 ? 'w-1/2' : 'w-full', i === 0 && 'self-end', i === STEPS.length - 1 && 'self-start')} />
            </div>
          </div>
        ))}
      </div>
      <svg viewBox="0 0 12 33" className="w-3 h-[33px] mt-2 -ml-1.5 shrink-0" fill="#5c5c5c">
        <path d="M0 0h12v4L7 9v24H5V9L0 4z" />
      </svg>
      <svg viewBox="0 0 16 16" className="w-4 h-4 ml-auto mr-[9px] mt-4" fill="none">
        <circle cx="8" cy="8" r="4.500" stroke="#8a8a8a" strokeWidth="3" />
        <circle cx="8" cy="8" r="6.700" stroke="#8a8a8a" strokeWidth="2.500" strokeDasharray="2.630 2.630" />
      </svg>
    </div>
  );
}

/* ---------- windows taskbar ---------- */

function Taskbar() {
  return (
    <div className="h-9 flex shrink-0 bg-[linear-gradient(90deg,#f3e4cb_0,#f3e4cb_398px,#e9e6b0_440px,#f0e3c9_490px,#f3e4cb_690px,#e8e6ae_740px,#f1e4c8_790px,#f3e4cb_1000px,#e8e6ae_1050px,#f2e4ca_1090px,#f3e4cb_1600px,#e9e7b0_1650px,#f3e4cb_1690px)] font-['Open_Sans',sans-serif]">
      <div className="w-12 flex items-center justify-center shrink-0 pt-[3px]">
        <svg viewBox="0 0 16 16" className="w-4 h-4" fill="#000">
          <path d="M0 2l7-1v6.500H0zM8 1l8-1v7.500H8zM0 8.500h7V15l-7-1zM8 8.500h8V16l-8-1z" />
        </svg>
      </div>
      <div className="w-[344px] border-x border-t border-[#c9c0b0] bg-white flex items-center pl-[11px] shrink-0">
        <svg viewBox="0 0 17 17" className="w-[17px] h-[17px] mt-0.5" fill="none" stroke="#111" strokeWidth="1.300">
          <circle cx="10.500" cy="6.500" r="5.300" />
          <path d="M6.500 10.500l-6 6" />
        </svg>
        <span className="ml-[11px] mt-1 text-[14.500px] leading-none text-[#333] tracking-[-0.300px] whitespace-nowrap">Type here to search</span>
      </div>
      <svg viewBox="392 1040 149 36" className="w-[149px] h-9 shrink-0" fill="none">
        <path d="M409.500 1055.500h9v8h-9zM409 1052h2M417 1052h2M409.500 1054v-2M418.500 1054v-2M409.500 1067v-2h9v2M422.500 1052v3M422.500 1061v6" stroke="#111" strokeWidth="1.300" />
        <path d="M422 1056h2v3h-2z" fill="#111" />
        <circle cx="467" cy="1060" r="12" fill="#1c85cf" />
        <path d="M456 1055c4-9 18-10 22 0 2 6-1 9-6 9-4 0-5-2-3-4 1-5-8-8-13-5z" fill="#3dc6a8" />
        <path d="M470 1049c5 1 9 5 9 10 0 3-2 5-6 5-4 0-4-2-3-4z" fill="#67d25d" />
        <path d="M466 1057c2-2 6 0 5 2-2 4 0 5 3 5l-4 2c-4-1-6-5-4-9z" fill="#f1f1e0" />
        <circle cx="461" cy="1065" r="3" fill="#c99a80" />
        <path d="M455.500 1071c1-5 10-5 11 0z" fill="#23242c" />
        <path d="M505 1050h8l2 3h11v17h-21z" fill="#e9a91f" />
        <path d="M505 1056h21v13h-21z" fill="#ffd34e" />
        <path d="M509 1062h13v8h-3v-4h-7v4h-3z" fill="#3f93d8" />
      </svg>
      <div className="w-[49px] bg-[#faf2e8] flex items-center justify-center shrink-0">
        <svg viewBox="0 0 22 24" className="w-[22px] h-6 mt-1">
          <path d="M0 0h22v24H0z" fill="#fae0cc" />
          <path d="M6 3h11v5h-6v2h5v4h-5v6H6z" fill="#d9781f" />
          <path d="M6 3h3v17H6z" fill="#a5540f" />
          <path d="M13 20h7v2h-7z" fill="#e8b48c" />
        </svg>
      </div>
      <div className="w-[53px] flex items-center justify-center pr-1.5 shrink-0">
        <svg viewBox="0 0 22 22" className="w-5 h-5 mt-1" fill="none">
          <circle cx="11" cy="11" r="10.500" fill="#1c1c1e" />
          <path d="M11 11C7 9 6 5 9 2.500M11 11c4-2 8-1 8.500 3M11 11c0 4-3 7-7 5" stroke="#cfcfcf" strokeWidth="1.500" />
          <circle cx="12.500" cy="6.500" r="3" fill="#3a3a3c" />
          <circle cx="14" cy="15" r="3" fill="#3a3a3c" />
          <circle cx="6.500" cy="12" r="3" fill="#3a3a3c" />
        </svg>
      </div>
      <div className="w-[38px] bg-[#aed68c] flex items-center justify-center shrink-0">
        <svg viewBox="0 0 26 26" className="w-[26px] h-[26px] mt-1 ml-1" fill="none">
          <path d="M1 5l20-4 1 4-20 4z" fill="#222" />
          <path d="M5 4l3 4M11 3l3 4M17 2l3 4" stroke="#fff" strokeWidth="2" />
          <path d="M2 9h20v14H2z" fill="#f4f4f4" stroke="#222" />
          <path d="M2.500 9.500h19v3h-19z" fill="#222" />
          <path d="M5 9.500l2 3M11 9.500l2 3M17 9.500l2 3" stroke="#fff" strokeWidth="1.800" />
          <text x="4" y="21.500" fontSize="10" fontWeight="700" fill="#c93c1e">3</text>
          <path d="M12 12l13 7-13 7z" fill="#b9d0f1" stroke="#41639c" />
        </svg>
      </div>
      <div className="w-[3px] bg-[#c8c995] shrink-0" />
      <div className="w-2 shrink-0" />
      <div className="w-[5px] bg-[#9fd088] shrink-0" />
      <div className="w-[35px] bg-[#d6cba8] flex items-center shrink-0">
        <svg viewBox="0 0 24 24" className="w-6 h-6 ml-[3px] mt-1" fill="none">
          <path d="M0 0h24v24H0z" fill="#0f4c50" />
          <path d="M2 2h14v20H2z" fill="#128a86" />
          <path d="M5 4l14 8L5 20z" fill="#2bd0bb" />
          <path d="M18.500 3h3v3h-3zM18.500 8h3v3h-3zM18.500 14h3v3h-3zM18.500 19h3v2h-3z" fill="#1a7a78" />
        </svg>
      </div>
      <div className="ml-auto flex items-center text-[#1a1a1a] whitespace-nowrap">
        <svg viewBox="0 0 22 20" className="w-[22px] h-5 mr-[7px] mt-0.5">
          <path d="M6 0c-1 5 3 8 8 7-1 4-6 6-10 4s-5-5-3-7c2 1 4-1 5-4z" fill="#f3b72c" />
          <path d="M5 19c-4 0-4-6 0-6 1-5 8-6 10-2 4-1 7 2 6 5-1 2-2 3-4 3z" fill="#cfe2fa" stroke="#9dbfe9" strokeWidth=".6" />
        </svg>
        <span className="w-[38px] mt-1.5 text-[14px] leading-none tracking-[-0.600px]">22°C</span>
        <span className="w-[66px] mt-1.5 text-[14px] leading-none tracking-[-0.550px]">Berawan</span>
        <svg viewBox="1686 1040 120 36" className="w-[120px] h-9 shrink-0" fill="none" stroke="#111" strokeWidth="1.400">
          <path d="M1689 1063l6-6 6 6" />
          <path d="M1715.500 1052h6v11h-6z" fill="#111" />
          <path d="M1713.500 1060c0 6 10 6 10 0M1718.500 1065v3M1715 1068h7" />
          <path d="M1738.500 1067c0-7 4-11 11-12M1741.500 1067c0-5 3-8 8-9M1744.500 1067c0-3 2-5 5-6" strokeWidth="1.100" />
          <circle cx="1748.500" cy="1065.500" r="1.500" fill="#111" stroke="none" />
          <path d="M1758.500 1058h3l4-3.500v11l-4-3.500h-3zM1768 1058c1 1 1 3 0 4M1770.500 1056c2 2 2 6 0 8" strokeWidth="1.200" />
          <path d="M1773 1054.500c2 3 2 8 0 11" stroke="#999" />
          <path d="M1788.500 1056.500h9v8h-11" />
          <path d="M1789 1058h7v5h-7z" fill="#111" />
          <path d="M1798 1059h1.500v3h-1.500M1784 1053v3M1787 1053v3M1783 1056h5l-1 3h-3zM1785.500 1059v5" strokeWidth="1.200" />
        </svg>
        <div className="w-[58px] mt-1 text-[11.500px] leading-[18px] tracking-[-0.350px] text-center">
          <div>10:28 PM</div>
          <div>2/10/2022</div>
        </div>
        <svg viewBox="1864 1040 50 36" className="w-[50px] h-9 shrink-0" fill="none">
          <path d="M1879 1052h16v13h-9l-4 4v-4h-3z" fill="#000" />
          <path d="M1881.500 1055.500h11M1881.500 1058.500h11M1881.500 1061.500h7" stroke="#f3e4cb" />
          <circle cx="1894.500" cy="1067" r="7.500" fill="#d9d4cb" stroke="#8d8a84" />
          <text x="1894.500" y="1071" textAnchor="middle" fontSize="11" fontWeight="600" fill="#222">2</text>
        </svg>
        <span className="w-px h-9 ml-px bg-[#a59c8b]" />
      </div>
    </div>
  );
}

export default function App() {
  return (
    <div className="w-[1916px] h-[1076px] overflow-hidden flex flex-col bg-white font-['Roboto',sans-serif]">
      <TitleBar />
      <TabStrip />
      <Ribbon />
      <Viewport />
      <Timeline />
      <Taskbar />
    </div>
  );
}
